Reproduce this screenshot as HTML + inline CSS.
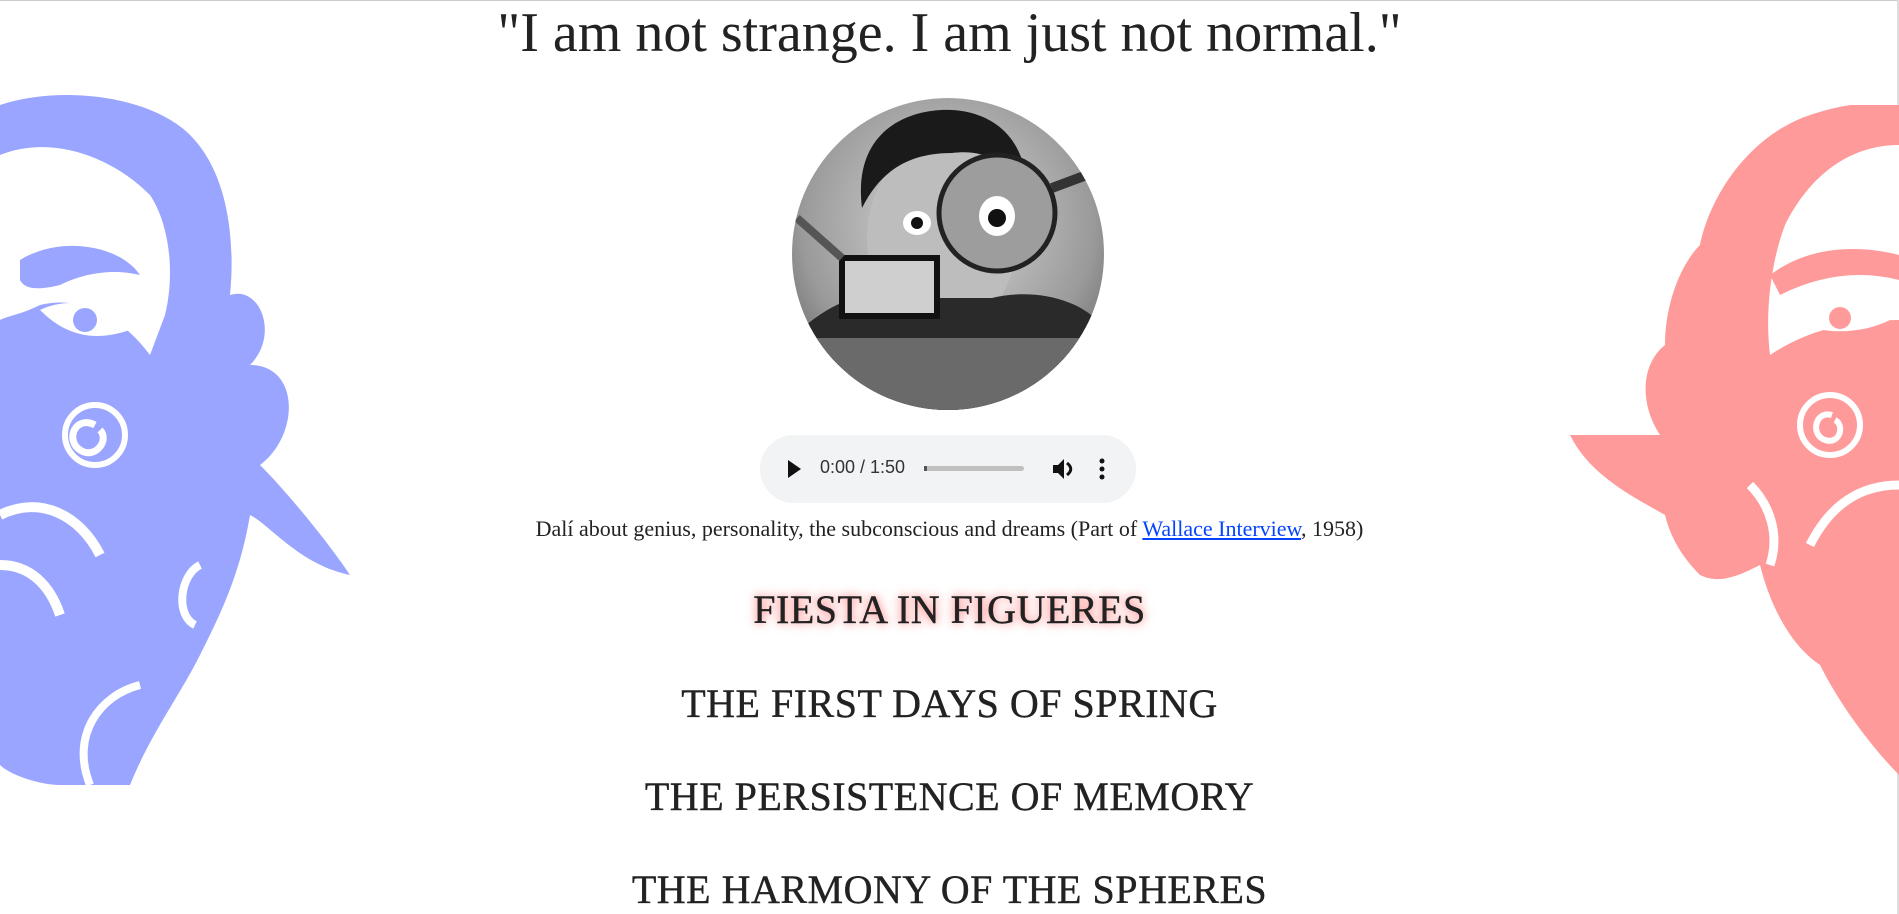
<!DOCTYPE html>
<html><head><meta charset="utf-8"><style>
html,body{margin:0;padding:0;background:#fff;width:1899px;height:914px;overflow:hidden;font-family:"Liberation Serif",serif;color:#222;}
.top{position:absolute;left:0;top:0;width:1899px;height:1px;background:#ccc}
.rb{position:absolute;right:0;top:0;width:2px;height:914px;background:#ddd}
.quote{position:absolute;top:2px;left:0;width:1899px;text-align:center;font-size:56px;line-height:62px;}
.photo{position:absolute;left:792px;top:98px;width:312px;height:312px;border-radius:50%;overflow:hidden;background:radial-gradient(circle at 50% 40%,#d8d8d8,#9a9a9a 60%,#444 100%);}
.audio{position:absolute;left:760px;top:435px;width:376px;height:68px;border-radius:34px;background:#f1f3f4;font-family:"Liberation Sans",sans-serif;font-size:18px;color:#333;}
.cap{position:absolute;top:516px;left:0;width:1899px;text-align:center;font-size:22px;}
.cap a{color:#0645ff;text-decoration:underline}
.h{position:absolute;left:0;width:1899px;text-align:center;font-size:40px;letter-spacing:0.5px;line-height:44px;-webkit-text-stroke:0.4px #222}
.glow{text-shadow:0 0 8px #ff8a8a,0 0 14px #ffb0b0}
</style></head><body>
<div class="top"></div><div class="rb"></div>
<svg style="position:absolute;left:0;top:95px" width="360" height="700" viewBox="0 0 360 700">
<path fill="#9aa5ff" d="M0 10 C60 -10 150 0 190 40 C230 80 235 150 230 200 C260 190 280 240 250 270 C300 270 300 340 260 370 C290 400 330 450 350 480 C300 470 270 430 250 420 C240 480 220 520 200 560 C180 600 150 640 130 690 L60 690 C40 690 10 680 0 670 Z"/>
<path fill="#fff" d="M0 60 C50 40 110 60 150 100 C170 130 175 180 165 220 L150 260 C120 220 80 200 40 210 C20 220 10 220 0 225 Z"/>
<path fill="#9aa5ff" d="M20 165 C60 140 120 150 140 180 C120 175 90 175 60 190 C40 195 25 195 20 185 Z M0 250 C40 240 90 250 140 300 C120 300 100 300 80 310 L0 310 Z"/>
<path fill="#fff" d="M40 215 C70 200 110 210 130 235 C100 245 70 245 40 215 Z"/>
<circle cx="85" cy="225" r="12" fill="#9aa5ff"/>
<path fill="none" stroke="#fff" stroke-width="7" d="M95 330 C75 320 65 345 80 355 C95 365 110 345 100 335"/>
<circle cx="95" cy="340" r="30" fill="none" stroke="#fff" stroke-width="6"/>
<path fill="none" stroke="#fff" stroke-width="10" d="M0 420 C40 400 80 420 100 460 M0 470 C30 470 50 490 60 520"/>
<path fill="none" stroke="#fff" stroke-width="8" d="M140 590 C100 600 70 640 90 690 M200 470 C180 480 175 520 195 530"/>
</svg>
<svg style="position:absolute;left:1570px;top:105px" width="329" height="670" viewBox="0 0 329 670">
<path fill="#ff9a9a" d="M329 0 L329 670 C300 640 270 600 250 560 C220 540 200 500 190 460 C170 470 150 480 130 470 C110 450 100 430 95 410 C60 390 20 370 0 330 C40 330 70 330 90 330 C70 300 70 260 95 240 C95 200 110 160 130 140 C140 90 180 30 240 10 C270 0 300 -5 329 0 Z"/>
<path fill="#fff" d="M329 40 C280 40 240 70 215 120 C200 160 195 210 200 250 C230 230 270 215 329 215 Z"/>
<path fill="#ff9a9a" d="M200 170 C240 140 290 140 329 150 L329 175 C290 165 250 170 210 190 Z M230 260 C260 250 300 250 329 255 L329 285 C300 280 260 285 230 290 Z"/>
<path fill="#fff" d="M220 215 C250 195 290 195 320 215 C290 230 250 230 220 215 Z"/>
<circle cx="270" cy="213" r="11" fill="#ff9a9a"/>
<circle cx="260" cy="320" r="30" fill="none" stroke="#fff" stroke-width="6"/>
<path fill="none" stroke="#fff" stroke-width="6" d="M262 310 C245 305 240 330 255 335 C270 340 275 320 265 315"/>
<path fill="none" stroke="#fff" stroke-width="9" d="M329 380 C290 380 260 400 240 440 M180 380 C200 400 210 430 200 460"/>
</svg>
<div class="quote">"I am not strange. I am just not normal."</div>
<div class="photo">
<svg width="312" height="312" viewBox="0 0 312 312">
<ellipse cx="150" cy="140" rx="75" ry="95" fill="#bdbdbd"/>
<path d="M70 110 C60 30 120 10 160 12 C210 15 240 50 235 110 C225 70 200 50 160 55 C120 55 90 70 70 110 Z" fill="#1a1a1a"/>
<path d="M0 312 L0 240 C40 200 80 190 110 200 L200 200 C240 190 290 200 312 230 L312 312 Z" fill="#2a2a2a"/>
<rect x="0" y="240" width="312" height="72" fill="#6a6a6a"/>
<circle cx="205" cy="115" r="58" fill="#9d9d9d" stroke="#222" stroke-width="5"/>
<ellipse cx="205" cy="118" rx="18" ry="20" fill="#fff"/><circle cx="205" cy="120" r="9" fill="#111"/>
<ellipse cx="125" cy="125" rx="14" ry="12" fill="#fff"/><circle cx="125" cy="125" r="6" fill="#111"/>
<rect x="50" y="160" width="95" height="58" fill="#cfcfcf" stroke="#111" stroke-width="6"/>
<path d="M260 90 L300 75" stroke="#333" stroke-width="10"/>
<path d="M5 120 L50 160" stroke="#555" stroke-width="8"/>
</svg></div>
<div class="audio">
<svg style="position:absolute;left:26px;top:24px" width="16" height="20"><path d="M2 1 L15 10 L2 19 Z" fill="#111"/></svg>
<span style="position:absolute;left:60px;top:22px">0:00 / 1:50</span>
<div style="position:absolute;left:164px;top:31px;width:100px;height:5px;border-radius:3px;background:#c0c0c0"></div>
<div style="position:absolute;left:164px;top:31px;width:3px;height:5px;background:#555"></div>
<svg style="position:absolute;left:292px;top:22px" width="22" height="24"><path d="M1 8 H6 L12 2 V22 L6 16 H1 Z" fill="#111"/><path d="M15 6 C20 10 20 14 15 18" stroke="#111" stroke-width="3" fill="none"/></svg>
<svg style="position:absolute;left:338px;top:22px" width="8" height="24"><circle cx="4" cy="4" r="2.5" fill="#111"/><circle cx="4" cy="12" r="2.5" fill="#111"/><circle cx="4" cy="20" r="2.5" fill="#111"/></svg>
</div>
<div class="cap">Dalí about genius, personality, the subconscious and dreams (Part of <a>Wallace Interview</a>, 1958)</div>
<div class="h glow" style="top:588px">FIESTA IN FIGUERES</div>
<div class="h" style="top:682px">THE FIRST DAYS OF SPRING</div>
<div class="h" style="top:775px">THE PERSISTENCE OF MEMORY</div>
<div class="h" style="top:868px">THE HARMONY OF THE SPHERES</div>
</body></html>
